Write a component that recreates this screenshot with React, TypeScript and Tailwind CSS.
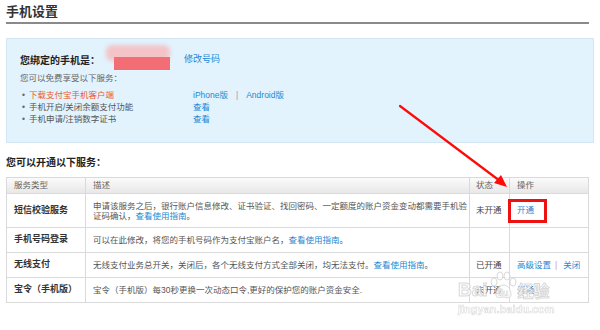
import React from "react";

const F = { fontFamily: '"Liberation Sans", "Noto Sans CJK SC", sans-serif' };

function Redaction() {
  return (
    <span className="relative inline-block w-[68px] h-[20px]">
      <span className="absolute left-[2px] top-[-5px] w-[64px] h-[16px] rounded-[6px] bg-[#f3c3c8] blur-[2px]" />
      <span className="absolute left-[10px] top-[7px] w-[56px] h-[13px] bg-[#f26d74]" />
    </span>
  );
}

export default function App() {
  const link = "text-[#1d87d2]";
  return (
    <div className="relative w-[600px] h-[330px] bg-white overflow-hidden px-[6px] text-[#555]" style={F}>
      <div className="w-[583px] h-[24px] border-b-2 border-[#8a8a8a]">
        <div className="text-[13px] font-bold leading-[23px] text-[#333]">手机设置</div>
      </div>

      <div className="mt-[14px] h-[105px] border border-[#d3e6f3] bg-[#e2f3fd] pl-[13px] pt-[11px] text-[8.5px]">
        <div className="flex items-center h-[20px]">
          <span className="text-[10px] font-bold text-[#222] w-[84px]">您绑定的手机是：</span>
          <Redaction />
          <span className={`ml-[12px] text-[9px] ${link}`}>修改号码</span>
        </div>
        <div className="mt-[2px] leading-[12px] text-[#666]">您可以免费享受以下服务：</div>
        <div className="mt-[5px] leading-[12px]">
          <div className="flex">
            <div className="w-[173px] flex"><span className="w-[9px] pl-[2px] text-[#666]">•</span><span className="text-[#f0582c]">下载支付宝手机客户端</span></div>
            <span className={link}>iPhone版</span>
            <span className="ml-[8px] text-[#999]">|</span>
            <span className={`ml-[8px] ${link}`}>Android版</span>
          </div>
          <div className="flex">
            <div className="w-[173px] flex"><span className="w-[9px] pl-[2px] text-[#666]">•</span><span>手机开启/关闭余额支付功能</span></div>
            <span className={link}>查看</span>
          </div>
          <div className="flex">
            <div className="w-[173px] flex"><span className="w-[9px] pl-[2px] text-[#666]">•</span><span>手机申请/注销数字证书</span></div>
            <span className={link}>查看</span>
          </div>
        </div>
      </div>

      <div className="mt-[14px] leading-[12px] text-[10px] font-bold text-[#222]">您可以开通以下服务：</div>

      <div className="mt-[8px] w-[583px] border border-[#dadada] text-[8.5px]">
        <div className="grid grid-cols-[79px_384px_40px_78px] h-[16px] bg-gradient-to-b from-[#fbfbfb] to-[#e8e8e8] border-b border-[#dadada] text-[#666] items-center">
          <div className="pl-[7px] h-full flex items-center border-r border-[#dadada]">服务类型</div>
          <div className="pl-[7px] h-full flex items-center border-r border-[#dadada]">描述</div>
          <div className="pl-[6px] h-full flex items-center border-r border-[#dadada]">状态</div>
          <div className="pl-[7px] h-full flex items-center">操作</div>
        </div>

        <div className="grid grid-cols-[79px_384px_40px_78px] h-[34px] border-b border-[#dadada]">
          <div className="pl-[7px] flex items-center border-r border-[#dadada] text-[9px] font-bold text-[#333]">短信校验服务</div>
          <div className="pl-[7px] flex flex-col justify-center leading-[10px] border-r border-[#dadada]">
            <div>申请该服务之后，银行账户信息修改、证书验证、找回密码、一定额度的账户资金变动都需要手机验</div>
            <div>证码确认，<span className={link}>查看使用指南</span>。</div>
          </div>
          <div className="pl-[6px] flex items-center border-r border-[#dadada] text-[#444]">未开通</div>
          <div className="relative pl-[7px] flex items-center">
            <span className={link}>开通</span>
            <span className="absolute left-[-2px] top-[5px] w-[39px] h-[24px] border-[3px] border-[#ee1111]" />
          </div>
        </div>

        <div className="grid grid-cols-[79px_384px_40px_78px] h-[25px] border-b border-[#dadada]">
          <div className="pl-[7px] flex items-center border-r border-[#dadada] text-[9px] font-bold text-[#333]">手机号码登录</div>
          <div className="pl-[7px] flex items-center border-r border-[#dadada]">可以在此修改，将您的手机号码作为支付宝账户名，<span className={link}>查看使用指南</span>。</div>
          <div className="border-r border-[#dadada]" />
          <div />
        </div>

        <div className="grid grid-cols-[79px_384px_40px_78px] h-[25px] border-b border-[#dadada]">
          <div className="pl-[7px] flex items-center border-r border-[#dadada] text-[9px] font-bold text-[#333]">无线支付</div>
          <div className="pl-[7px] flex items-center border-r border-[#dadada]">无线支付业务总开关，关闭后，各个无线支付方式全部关闭，均无法支付。<span className={link}>查看使用指南</span>。</div>
          <div className="pl-[6px] flex items-center border-r border-[#dadada] text-[#444]">已开通</div>
          <div className="pl-[7px] flex items-center">
            <span className={link}>高级设置</span>
            <span className="ml-[4px] text-[#c9a]">|</span>
            <span className={`ml-[6px] ${link}`}>关闭</span>
          </div>
        </div>

        <div className="grid grid-cols-[79px_384px_40px_78px] h-[24px]">
          <div className="pl-[7px] flex items-center border-r border-[#dadada] text-[9px] font-bold text-[#333]">宝令（手机版）</div>
          <div className="pl-[7px] flex items-center border-r border-[#dadada]">宝令（手机版）每30秒更换一次动态口令,更好的保护您的账户资金安全.</div>
          <div className="pl-[6px] flex items-center border-r border-[#dadada] text-[#444]">未开通</div>
          <div className="pl-[7px] flex items-center"><span className={link}>开通</span></div>
        </div>
      </div>

      {/* annotation arrow */}
      <svg className="absolute left-0 top-0 pointer-events-none" width="600" height="330">
        <line x1="400" y1="106" x2="500" y2="181" stroke="#ff0a0a" strokeWidth="2.2" strokeLinecap="round" />
        <polygon points="507,187 494,183 501,175" fill="#ff0a0a" />
      </svg>

      {/* watermark */}
      <div className="absolute left-[458px] top-[270px] pointer-events-none select-none opacity-80">
        <div className="flex items-end h-[30px]">
          <span className="text-[19px] font-bold leading-[20px] text-white [-webkit-text-stroke:1px_#cfcfcf]" style={{ fontFamily: '"Liberation Sans", sans-serif' }}>Bai</span>
          <svg width="30" height="28" viewBox="0 0 30 28" className="mb-[1px]">
            <g fill="white" stroke="#cfcfcf" strokeWidth="1">
              <ellipse cx="6" cy="11" rx="3" ry="4" />
              <ellipse cx="12" cy="5" rx="3" ry="4" />
              <ellipse cx="19" cy="5" rx="3" ry="4" />
              <ellipse cx="25" cy="11" rx="3" ry="4" />
              <path d="M8 24 C8 17 12 14 15 14 C19 14 23 17 23 24 C23 27 19 27 15 26 C12 27 8 27 8 24 Z" />
            </g>
            <text x="15" y="25" fontSize="9" textAnchor="middle" fill="white" stroke="#cfcfcf" strokeWidth="0.6" fontFamily="Liberation Sans" fontWeight="bold">du</text>
          </svg>
          <span className="text-[16px] font-bold leading-[20px] text-white [-webkit-text-stroke:1px_#cfcfcf]" style={{ fontFamily: '"Noto Sans CJK SC", sans-serif' }}>经验</span>
        </div>
        <div className="mt-[3px] text-[11px] font-bold leading-[12px] text-white [-webkit-text-stroke:0.6px_#d4d4d4]" style={{ fontFamily: '"Liberation Sans", sans-serif' }}>jingyan.baidu.com</div>
      </div>
    </div>
  );
}
